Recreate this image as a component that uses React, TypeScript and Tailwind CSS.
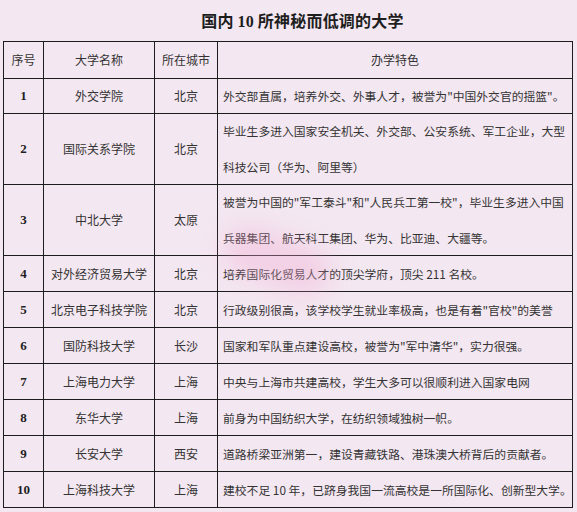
import React from "react";

type Row = { n: string; name: string; city: string; desc: React.ReactNode; h: string };

const rows: Row[] = [
  { n: "1", name: "外交学院", city: "北京", desc: "外交部直属，培养外交、外事人才，被誉为\"中国外交官的摇篮\"。", h: "h-[35px]" },
  {
    n: "2",
    name: "国际关系学院",
    city: "北京",
    desc: (
      <>
        <div className="leading-[36px]">毕业生多进入国家安全机关、外交部、公安系统、军工企业，大型</div>
        <div className="leading-[36px]">科技公司（华为、阿里等）</div>
      </>
    ),
    h: "h-[71px]",
  },
  {
    n: "3",
    name: "中北大学",
    city: "太原",
    desc: (
      <>
        <div className="leading-[36px]">被誉为中国的"军工泰斗"和"人民兵工第一校"，毕业生多进入中国</div>
        <div className="leading-[36px]">兵器集团、航天科工集团、华为、比亚迪、大疆等。</div>
      </>
    ),
    h: "h-[71px]",
  },
  { n: "4", name: "对外经济贸易大学", city: "北京", desc: "培养国际化贸易人才的顶尖学府，顶尖 211 名校。", h: "h-[36px]" },
  { n: "5", name: "北京电子科技学院", city: "北京", desc: "行政级别很高，该学校学生就业率极高，也是有着\"官校\"的美誉", h: "h-[36px]" },
  { n: "6", name: "国防科技大学", city: "长沙", desc: "国家和军队重点建设高校，被誉为\"军中清华\"，实力很强。", h: "h-[36px]" },
  { n: "7", name: "上海电力大学", city: "上海", desc: "中央与上海市共建高校，学生大多可以很顺利进入国家电网", h: "h-[36px]" },
  { n: "8", name: "东华大学", city: "上海", desc: "前身为中国纺织大学，在纺织领域独树一帜。", h: "h-[36px]" },
  { n: "9", name: "长安大学", city: "西安", desc: "道路桥梁亚洲第一，建设青藏铁路、港珠澳大桥背后的贡献者。", h: "h-[36px]" },
  { n: "10", name: "上海科技大学", city: "上海", desc: "建校不足 10 年，已跻身我国一流高校是一所国际化、创新型大学。", h: "h-[36px]" },
];

const cjk = "font-['Noto_Sans_CJK_SC',sans-serif]";
const cell = "border-r border-b border-[#1c1c1c] flex items-center";

export default function App() {
  return (
    <div className={`relative w-[577px] h-[512px] bg-[#f3e7f1] text-[#333333] ${cjk} overflow-hidden`}>
      <div className="h-[41px] flex items-center justify-center pl-[28px]">
        <h1 className="text-[16px] font-bold text-[#1e1e1e] tracking-[0.2px]">
          国内 <span className="font-['Liberation_Serif',serif]">10</span> 所神秘而低调的大学
        </h1>
      </div>
      <div className="ml-[3px] w-[570px] border-l border-t border-[#1c1c1c] grid grid-cols-[40px_111px_63px_355px] text-[12px]">
        <div className={`${cell} h-[37px] justify-center`}>序号</div>
        <div className={`${cell} h-[37px] justify-center`}>大学名称</div>
        <div className={`${cell} h-[37px] justify-center`}>所在城市</div>
        <div className={`${cell} h-[37px] justify-center`}>办学特色</div>
        {rows.map((r) => (
          <React.Fragment key={r.n}>
            <div className={`${cell} ${r.h} justify-center font-['Liberation_Serif',serif] font-bold text-[13px] text-[#1e1e1e]`}>{r.n}</div>
            <div className={`${cell} ${r.h} justify-center whitespace-nowrap`}>{r.name}</div>
            <div className={`${cell} ${r.h} justify-center`}>{r.city}</div>
            <div className={`${cell} ${r.h} pl-[5px] whitespace-nowrap text-[11.8px]`}>
              <div className="flex flex-col">{r.desc}</div>
            </div>
          </React.Fragment>
        ))}
      </div>
      <div className="absolute left-[222px] top-[236px] w-[110px] h-[50px] rounded-full bg-[#f2a6cf] opacity-35 blur-[12px] rotate-[20deg] pointer-events-none" />
    </div>
  );
}
